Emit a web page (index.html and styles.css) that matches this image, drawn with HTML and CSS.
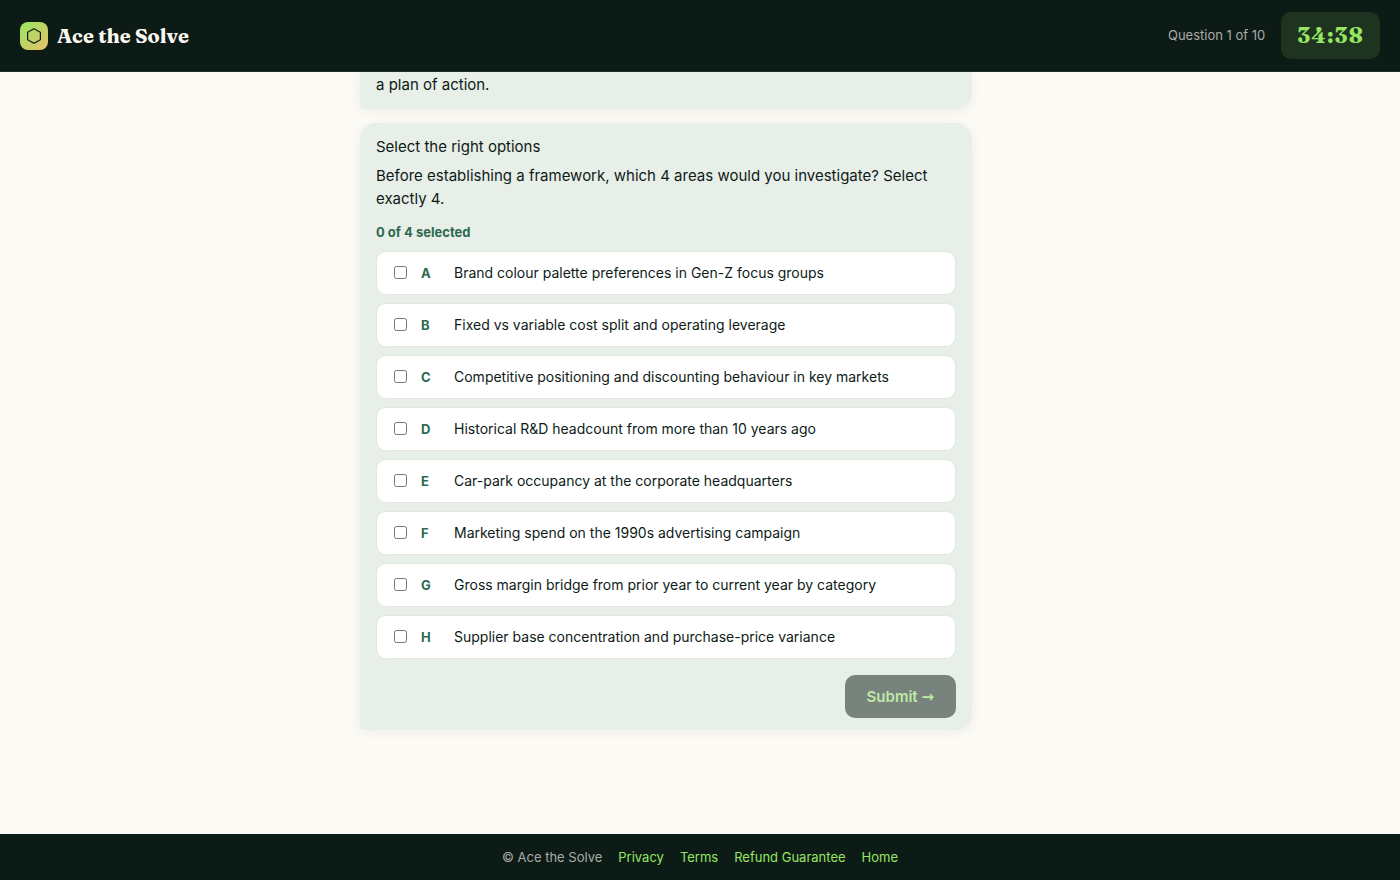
FILE: index.html
```html
<!DOCTYPE html>
<html lang="en">
<head>
    <meta charset="UTF-8">
    <meta name="viewport" content="width=device-width, initial-scale=1.0">
    <title>Ace the Solve</title>
    <link rel="stylesheet" href="styles.css">
</head>
<body>
    <header class="topbar">
        <div class="brand">
            <span class="brand-mark">
                <svg width="16" height="18" viewBox="0 0 16 18" fill="none" stroke="#0d1b17" stroke-width="1.2" aria-hidden="true">
                    <path d="M8 1.7 14.4 5.3V12.7L8 16.3 1.6 12.7V5.3Z"/>
                </svg>
            </span>
            <span class="brand-name">Ace the Solve</span>
        </div>
        <div class="status">
            <span class="progress">Question 1 of 10</span>
            <span class="timer">34:38</span>
        </div>
    </header>

    <main class="chat">
        <div class="thread">
            <div class="bubble bubble-continued">
                <p>a plan of action.</p>
            </div>

            <form class="bubble" id="questionForm">
                <p>Select the right options</p>
                <p class="question">Before establishing a framework, which 4 areas would you investigate? Select exactly 4.</p>
                <p class="counter" id="counter">0 of 4 selected</p>

                <div class="options">
                    <label class="option">
                        <input type="checkbox" name="area" value="A">
                        <span class="letter">A</span>
                        <span>Brand colour palette preferences in Gen-Z focus groups</span>
                    </label>
                    <label class="option">
                        <input type="checkbox" name="area" value="B">
                        <span class="letter">B</span>
                        <span>Fixed vs variable cost split and operating leverage</span>
                    </label>
                    <label class="option">
                        <input type="checkbox" name="area" value="C">
                        <span class="letter">C</span>
                        <span>Competitive positioning and discounting behaviour in key markets</span>
                    </label>
                    <label class="option">
                        <input type="checkbox" name="area" value="D">
                        <span class="letter">D</span>
                        <span>Historical R&amp;D headcount from more than 10 years ago</span>
                    </label>
                    <label class="option">
                        <input type="checkbox" name="area" value="E">
                        <span class="letter">E</span>
                        <span>Car-park occupancy at the corporate headquarters</span>
                    </label>
                    <label class="option">
                        <input type="checkbox" name="area" value="F">
                        <span class="letter">F</span>
                        <span>Marketing spend on the 1990s advertising campaign</span>
                    </label>
                    <label class="option">
                        <input type="checkbox" name="area" value="G">
                        <span class="letter">G</span>
                        <span>Gross margin bridge from prior year to current year by category</span>
                    </label>
                    <label class="option">
                        <input type="checkbox" name="area" value="H">
                        <span class="letter">H</span>
                        <span>Supplier base concentration and purchase-price variance</span>
                    </label>
                </div>

                <div class="actions">
                    <button type="submit" class="btn" id="submitBtn" disabled>Submit <span class="arrow">→</span></button>
                </div>
            </form>
        </div>
    </main>

    <footer class="footer">
        <span>© Ace the Solve</span>
        <a href="/privacy">Privacy</a>
        <a href="/terms">Terms</a>
        <a href="/refund">Refund Guarantee</a>
        <a href="/">Home</a>
    </footer>

    <script>
        // Submit unlocks once exactly four options are ticked
        const form = document.getElementById('questionForm');

        form.addEventListener('change', () => {
            const count = form.querySelectorAll('input:checked').length;
            document.getElementById('counter').textContent = `${count} of 4 selected`;
            document.getElementById('submitBtn').disabled = count !== 4;
        });
    </script>
</body>
</html>
```

FILE: styles.css
```css
* {
    margin: 0;
    padding: 0;
    box-sizing: border-box;
}

body {
    font-family: Inter, "Liberation Sans", sans-serif;
    font-size: 15px;
    line-height: 23px;
    color: #0d1b17;
    background-color: #fcfaf5;
    height: 100vh;
    display: flex;
    flex-direction: column;
}

.topbar {
    display: flex;
    align-items: center;
    justify-content: space-between;
    padding: 12px 20px;
    background-color: #0d1b17;
    border-bottom: 1px solid #1f3022;
}

.brand {
    display: flex;
    align-items: center;
    gap: 9px;
}

.brand-mark {
    display: flex;
    align-items: center;
    justify-content: center;
    width: 28px;
    height: 28px;
    border-radius: 8px;
    background: linear-gradient(135deg, #96e662, #e8c068);
}

.brand-name {
    font-family: Fraunces, "Liberation Serif", serif;
    font-size: 20px;
    font-weight: 700;
    color: #fbf8f0;
}

.status {
    display: flex;
    align-items: center;
    gap: 16px;
}

.progress {
    font-size: 13px;
    color: #a9aca6;
}

.timer {
    padding: 12px 16px;
    border-radius: 10px;
    background-color: #1f3321;
    color: #96e662;
    font-family: Fraunces, "DejaVu Serif", serif;
    font-size: 22px;
    font-weight: 700;
    font-variant-numeric: tabular-nums;
    letter-spacing: 1px;
}

.chat {
    flex: 1;
    overflow-y: auto;
}

.thread {
    display: flex;
    flex-direction: column;
    align-items: flex-start;
    gap: 14px;
    max-width: 680px;
    margin: 0 auto;
}

.bubble {
    width: 90%;
    padding: 12px 16px;
    border-radius: 16px 16px 16px 4px;
    background-color: #e8eee8;
    box-shadow: 0 2px 12px rgba(13, 27, 23, 0.06);
}

.bubble-continued {
    padding: 1px 16px 13px;
    border-top-left-radius: 0;
    border-top-right-radius: 0;
}

.question {
    margin-top: 6px;
}

.counter {
    margin-top: 11px;
    font-size: 13px;
    font-weight: 700;
    color: #2d6a4f;
}

.options {
    display: flex;
    flex-direction: column;
    gap: 8px;
    margin-top: 7px;
}

.option {
    display: flex;
    align-items: center;
    gap: 14px;
    padding: 10px 17px;
    line-height: 22px;
    font-size: 14px;
    background-color: #fff;
    border: 1px solid #e2e7e2;
    border-radius: 10px;
    cursor: pointer;
}

.option input {
    width: 13px;
    height: 13px;
    margin-bottom: 2px;
}

.letter {
    width: 19px;
    font-size: 13px;
    font-weight: 700;
    color: #2d6a4f;
}

.actions {
    display: flex;
    justify-content: flex-end;
    margin-top: 16px;
}

.btn {
    padding: 10px 22px;
    border: none;
    border-radius: 10px;
    background-color: #0d1b17;
    color: #96e662;
    font-family: inherit;
    font-size: 15px;
    font-weight: 600;
    line-height: 23px;
    cursor: pointer;
}

.btn:disabled {
    opacity: 0.5;
    cursor: not-allowed;
}

.arrow {
    font-family: "DejaVu Sans", sans-serif;
    line-height: 1;
}

.footer {
    display: flex;
    align-items: center;
    justify-content: center;
    flex-wrap: wrap;
    gap: 16px;
    padding: 12px 20px;
    background-color: #0d1b17;
    color: #a9aca6;
    font-size: 13px;
    line-height: 22px;
}

.footer a {
    color: #96e662;
    text-decoration: none;
}
```
